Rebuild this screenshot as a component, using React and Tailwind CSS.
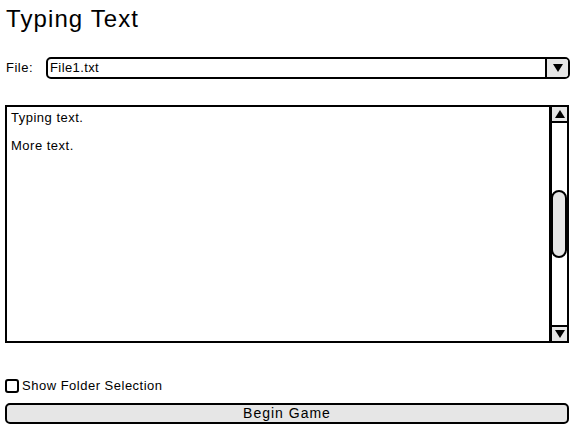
export default function App() {
  return (
    <div className="w-[573px] h-[431px] bg-white text-black relative overflow-hidden" style={{ fontFamily: '"Liberation Sans", Arial, sans-serif' }}>
      <div className="pt-[5px] pl-[6px] text-[24px] leading-[28px] tracking-[1.1px]">Typing Text</div>
      <div className="flex items-center mt-[24px] h-[22px]">
        <div className="pl-[6px] w-[46px] text-[13px] leading-[16px] tracking-[0.5px]">File:</div>
        <div className="flex-1 mr-[3px] h-[22px] border-2 border-black rounded-[5px] flex items-stretch overflow-hidden">
          <div className="flex-1 pl-[2px] text-[13px] leading-[18px] tracking-[0.4px]">File1.txt</div>
          <div className="w-[23px] bg-[#e6e6e6] border-l-2 border-black flex items-center justify-center">
            <svg width="10" height="8" viewBox="0 0 10 8"><path d="M0 0 L10 0 L5 8 Z" fill="#000" /></svg>
          </div>
        </div>
      </div>
      <div className="ml-[5px] mr-[4px] mt-[26px] h-[238px] border-2 border-black flex">
        <div className="flex-1 pl-[4px] pt-[3px] text-[13px] leading-[16px] tracking-[0.5px]">
          <p>Typing text.</p>
          <p className="mt-[12px]">More text.</p>
        </div>
        <div className="w-[18px] border-l-[3px] border-black flex flex-col">
          <div className="h-[16px] bg-[#e6e6e6] border-b-2 border-black flex items-center justify-center">
            <svg width="10" height="8" viewBox="0 0 10 8"><path d="M0 8 L10 8 L5 0 Z" fill="#000" /></svg>
          </div>
          <div className="flex-1 flex flex-col">
            <div className="h-[67px]" />
            <div className="h-[68px] -ml-[1px] bg-[#e6e6e6] border-2 border-black rounded-[9px]" />
            <div className="flex-1" />
          </div>
          <div className="h-[16px] bg-[#e6e6e6] border-t-2 border-black flex items-center justify-center">
            <svg width="10" height="8" viewBox="0 0 10 8"><path d="M0 0 L10 0 L5 8 Z" fill="#000" /></svg>
          </div>
        </div>
      </div>
      <div className="flex items-center mt-[35px] ml-[5px] h-[15px]">
        <div className="w-[14px] h-[14px] border-2 border-black rounded-[3px]" />
        <span className="ml-[3px] text-[13px] leading-[16px] tracking-[0.5px]">Show Folder Selection</span>
      </div>
      <div className="ml-[5px] mr-[4px] mt-[10px] h-[21px] bg-[#e6e6e6] border-2 border-black rounded-[5px] flex items-center justify-center text-[14px] leading-[17px] tracking-[1px]">
        Begin Game
      </div>
    </div>
  );
}
